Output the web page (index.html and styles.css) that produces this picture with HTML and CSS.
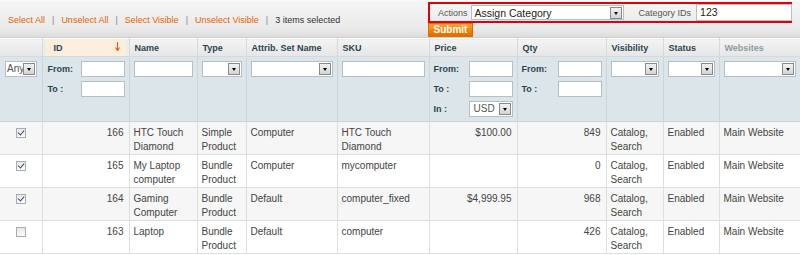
FILE: index.html
```html
<!DOCTYPE html>
<html lang="en">
<head>
<meta charset="UTF-8">
<title>Manage Products</title>
<link rel="stylesheet" href="styles.css">
</head>
<body>
<div class="massaction">
    <div class="mass-links">
        <a>Select All</a><span class="sep">|</span><a>Unselect All</a><span class="sep">|</span><a>Select Visible</a><span class="sep">|</span><a>Unselect Visible</a><span class="sep">|</span><span class="count">3 items selected</span>
    </div>
    <div class="mass-form">
        <div class="mass-box">
            <span class="mass-label">Actions</span>
            <div class="select select-actions">Assign Category<span class="arrow"></span></div>
            <span class="mass-label cat-label">Category IDs</span>
            <div class="input input-cat">123</div>
        </div>
        <button class="submit">Submit</button>
    </div>
</div>

<table class="grid">
    <colgroup>
        <col style="width:42px"><col style="width:87px"><col style="width:68px"><col style="width:49px">
        <col style="width:91px"><col style="width:92px"><col style="width:88px"><col style="width:89px">
        <col style="width:57px"><col style="width:56px"><col style="width:81px">
    </colgroup>
    <thead>
        <tr class="headings">
            <th></th>
            <th class="sorted"><span>ID</span>
                <svg class="sort-arrow" width="5" height="9" viewBox="0 0 5 9"><path d="M2.5 0V8M0.5 5.5L2.5 8.5L4.5 5.5" stroke="#e8590c" stroke-width="1.1" fill="none"/></svg>
            </th>
            <th>Name</th>
            <th>Type</th>
            <th>Attrib. Set Name</th>
            <th>SKU</th>
            <th>Price</th>
            <th>Qty</th>
            <th>Visibility</th>
            <th>Status</th>
            <th class="nosort">Websites</th>
        </tr>
        <tr class="filter">
            <td><div class="select select-any">Any<span class="arrow"></span></div></td>
            <td class="pad-id">
                <div class="range">
                    <label>From:</label><div class="input"></div>
                    <label>To :</label><div class="input"></div>
                </div>
            </td>
            <td><div class="input"></div></td>
            <td><div class="select"><span class="arrow"></span></div></td>
            <td><div class="select"><span class="arrow"></span></div></td>
            <td><div class="input"></div></td>
            <td>
                <div class="range">
                    <label>From:</label><div class="input"></div>
                    <label>To :</label><div class="input"></div>
                    <label>In :</label><div class="select select-cur">USD<span class="arrow"></span></div>
                </div>
            </td>
            <td>
                <div class="range">
                    <label>From:</label><div class="input"></div>
                    <label>To :</label><div class="input"></div>
                </div>
            </td>
            <td><div class="select"><span class="arrow"></span></div></td>
            <td><div class="select"><span class="arrow"></span></div></td>
            <td><div class="select"><span class="arrow"></span></div></td>
        </tr>
    </thead>
    <tbody>
        <tr class="even">
            <td class="cb"><span class="check on"></span></td>
            <td class="num">166</td>
            <td>HTC Touch Diamond</td>
            <td>Simple Product</td>
            <td>Computer</td>
            <td>HTC Touch Diamond</td>
            <td class="num">$100.00</td>
            <td class="num">849</td>
            <td>Catalog, Search</td>
            <td>Enabled</td>
            <td>Main Website</td>
        </tr>
        <tr>
            <td class="cb"><span class="check on"></span></td>
            <td class="num">165</td>
            <td>My Laptop computer</td>
            <td>Bundle Product</td>
            <td>Computer</td>
            <td>mycomputer</td>
            <td class="num"></td>
            <td class="num">0</td>
            <td>Catalog, Search</td>
            <td>Enabled</td>
            <td>Main Website</td>
        </tr>
        <tr class="even">
            <td class="cb"><span class="check on"></span></td>
            <td class="num">164</td>
            <td>Gaming Computer</td>
            <td>Bundle Product</td>
            <td>Default</td>
            <td>computer_fixed</td>
            <td class="num">$4,999.95</td>
            <td class="num">968</td>
            <td>Catalog, Search</td>
            <td>Enabled</td>
            <td>Main Website</td>
        </tr>
        <tr>
            <td class="cb"><span class="check"></span></td>
            <td class="num">163</td>
            <td>Laptop</td>
            <td>Bundle Product</td>
            <td>Default</td>
            <td>computer</td>
            <td class="num"></td>
            <td class="num">426</td>
            <td>Catalog, Search</td>
            <td>Enabled</td>
            <td>Main Website</td>
        </tr>
    </tbody>
</table>
</body>
</html>
```

FILE: styles.css
```css
body {
    margin: 0;
    padding: 0;
    font-family: "Liberation Sans", Arial, sans-serif;
    background: #fff;
    overflow: hidden;
}

/* top bar with mass actions */
.massaction {
    display: flex;
    height: 38px;
    box-sizing: border-box;
    background: linear-gradient(#f6f6f6, #e9e9e9 80%, #dcdcdc);
    border-top: 1px solid #fafafa;
    border-bottom: 1px solid #d2d2d2;
}

.mass-links {
    flex: 1;
    padding: 14px 0 0 8px;
    font-size: 9px;
    color: #333;
}

.mass-links a {
    color: #eb5e00;
}

.mass-links .sep {
    color: #888;
    margin: 0 7px;
}

.mass-form {
    width: 364px;
    margin-right: 8px;
    padding-top: 1px;
}

.mass-box {
    display: flex;
    align-items: center;
    height: 21px;
    box-sizing: border-box;
    border: 2px solid #e3000b;
    padding: 0 2px 0 8px;
    font-size: 9px;
    white-space: nowrap;
}

.mass-label {
    color: #555;
    margin-right: 3px;
    flex-shrink: 0;
}

.cat-label {
    margin-left: 15px;
    margin-right: 5px;
}

.submit {
    display: block;
    width: 45px;
    height: 14px;
    margin: 0;
    padding: 0;
    border: 1px solid #ed6502;
    background: linear-gradient(#ffa33c, #f18200 55%, #e46c00);
    color: #fff;
    font-family: inherit;
    font-size: 10px;
    font-weight: bold;
    line-height: 12px;
}

/* form fields */
.input {
    height: 16px;
    box-sizing: border-box;
    background: #fff;
    border: 1px solid #b6c0c4;
    font-size: 10px;
    line-height: 14px;
    padding: 0 3px;
    color: #222;
}

.select {
    position: relative;
    height: 16px;
    box-sizing: border-box;
    background: #fff;
    border: 1px solid #b6c0c4;
    font-size: 10px;
    line-height: 14px;
    padding: 0 3px;
    color: #222;
}

.select .arrow {
    position: absolute;
    right: 1px;
    top: 1px;
    width: 10px;
    height: 10px;
    border: 1px solid #8a8a8a;
    background: linear-gradient(#f2f2f2, #d4d4d4);
}

.select .arrow::after {
    content: "";
    position: absolute;
    left: 3px;
    top: 4px;
    border-left: 2px solid transparent;
    border-right: 2px solid transparent;
    border-top: 3px solid #000;
}

.select-actions {
    flex-shrink: 0;
    width: 153px;
    height: 15px;
    font-size: 10.5px;
}

.input-cat {
    flex-shrink: 0;
    width: 96px;
    height: 17px;
    font-size: 10.5px;
    line-height: 15px;
}

.select-any {
    width: 32px;
    padding: 0 0 0 1px;
    margin-left: 1px;
    overflow: hidden;
    color: #555;
}

.select-cur {
    padding: 0 4px;
    color: #555;
}

/* grid */
.grid {
    border-collapse: collapse;
    table-layout: fixed;
    width: 800px;
}

.headings th {
    height: 17px;
    padding: 0 5px;
    text-align: left;
    font-size: 9px;
    font-weight: bold;
    color: #2d444f;
    background: linear-gradient(#f3f3f3, #e6e6e6);
    border-top: 1px solid #fff;
    border-right: 1px solid #d6dadc;
    border-bottom: 1px solid #d3dadd;
    white-space: nowrap;
}

.headings th.sorted {
    position: relative;
    padding-left: 11px;
    background: #fbeedd;
    box-shadow: inset 3px 0 0 #ebecec, inset -3px 0 0 #ebecec;
}

.sort-arrow {
    position: absolute;
    right: 9px;
    top: 3px;
}

.headings th.nosort {
    color: #8e9ba1;
}

.filter td {
    height: 60px;
    vertical-align: top;
    padding: 4px 4px 0;
    background: #dce6ea;
    border-right: 1px solid #cbd6da;
    border-bottom: 1px solid #c9d3d6;
}

.filter td.pad-id {
    padding-left: 5px;
}

.range {
    display: grid;
    grid-template-columns: 1fr 44px;
    row-gap: 4px;
    align-items: center;
}

.range label {
    font-size: 9px;
    font-weight: bold;
    color: #2d444f;
}

tbody td {
    height: 33px;
    box-sizing: border-box;
    vertical-align: top;
    padding: 4px 4px 0;
    font-size: 10px;
    line-height: 14px;
    color: #444;
    border-right: 1px solid #dadfe0;
    border-bottom: 1px solid #dadfe0;
}

tbody tr.even td {
    background: #f6f6f6;
}

tbody td.num {
    text-align: right;
    padding-right: 5px;
}

tbody td.cb {
    text-align: center;
    padding-top: 6px;
}

.check {
    display: inline-block;
    position: relative;
    width: 10px;
    height: 10px;
    box-sizing: border-box;
    border: 1px solid #a6acb0;
    background: linear-gradient(#e8e8e8, #fafafa);
}

.check.on::after {
    content: "";
    position: absolute;
    left: 2px;
    top: 0;
    width: 3px;
    height: 5px;
    border-right: 1.5px solid #3d4d7a;
    border-bottom: 1.5px solid #3d4d7a;
    transform: rotate(40deg);
}
```
